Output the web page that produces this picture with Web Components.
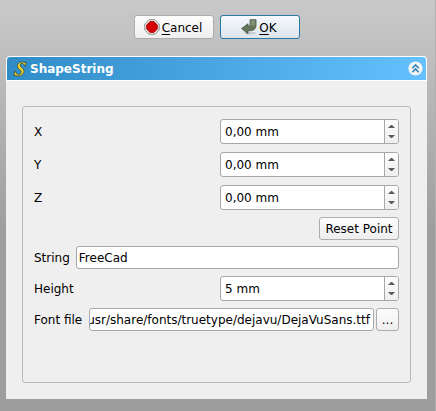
<!DOCTYPE html>
<html lang="en">
<head>
<meta charset="utf-8">
<title>ShapeString</title>
<style>
html,body{margin:0;height:100%;overflow:hidden}
body{font:12px/14px "DejaVu Sans",sans-serif;color:#000}
</style>
</head>
<body>
<task-dialog></task-dialog>
<script>
const define = (name, html) => customElements.define(name, class extends HTMLElement {
  constructor() {
    super();
    this.attachShadow({mode: 'open'}).innerHTML = '<style>*{box-sizing:border-box}:host{box-sizing:border-box}</style>' + html;
  }
});

define('push-button', `
<style>
:host{display:flex;align-items:center;justify-content:center;height:23px;border:1px solid #adadad;border-radius:3px;
background:linear-gradient(#fdfdfd,#eeeeee);white-space:pre}
:host([large]){width:80px;height:24px;gap:2px;padding:1px 2px 0 0}
:host([default]){border-color:#2b78a8;background:linear-gradient(#f6f9fc,#dce4ec)}
::slotted(svg){margin-bottom:2px}
</style><slot name="icon"></slot><span><slot></slot></span>`);

define('line-edit', `
<style>
:host{display:flex;align-items:center;height:23px;border:1px solid #a8a8a8;border-radius:3px;background:#fff;padding:0 2px;overflow:hidden;white-space:pre}
:host([end]){justify-content:flex-end;padding:0 3px 0 0}
span{flex:none}
</style><span><slot></slot></span>`);

define('spin-box', `
<style>
:host{display:flex;width:179px;height:25px;border:1px solid #a8a8a8;border-radius:3px;background:#fff;overflow:hidden}
.value{flex:1;padding:5px 0 0 4px;white-space:pre}
.steps{width:14px;border-left:1px solid #a8a8a8;background:linear-gradient(#fdfdfd,#efefef)}
svg{display:block}
</style><div class="value"><slot></slot></div>
<div class="steps"><svg width="13" height="23" shape-rendering="crispEdges" fill="#5c5c5c">
<path d="M5 5h3v1H5zM4 6h5v1H4zM3 7h7v1H3zM3 15h7v1H3zM4 16h5v1H4zM5 17h3v1H5z" fill="#a0a0a0"/>
<path d="M6 5h1v1h1v1h1v1H4V7h1V6h1zM4 15h5v1H8v1H7v1H6v-1H5v-1H4z"/></svg></div>`);

define('form-row', `
<style>
:host{display:flex;align-items:center;gap:7px}
:host([tight]){gap:6px}
.label{white-space:pre}
.field{flex:1;display:flex;gap:2px;justify-content:flex-end;min-width:0}
</style><div class="label"><slot name="label"></slot></div><div class="field"><slot></slot></div>`);

define('group-frame', `
<style>
:host{display:flex;flex-direction:column;margin:25px 16px 16px;border:1px solid #b9b9b9;border-radius:3px;padding:12px 11px;flex:1}
</style><slot></slot>`);

define('task-panel', `
<style>
:host{display:flex;flex-direction:column;width:421px;height:343px;background:#efefef;border-radius:4px 4px 0 0}
header{display:flex;align-items:center;height:25px;border:1px solid #fff;border-radius:4px 4px 0 0;background:linear-gradient(90deg,#308cc6,#65c0ff);
color:#fff;font-weight:bold;padding:0 3px 0 6px;flex:none}
.title{flex:1;padding-left:3px;margin-top:1px}
svg{display:block;flex:none}
</style>
<header><svg width="14" height="16" viewBox="0 0 14 16"><path d="M12.2 5.3 13.3 1l-1.3.5C9 .2 4.6 1.1 4.3 4.9c-.2 3.4 4.2 3.6 3.9 6.2-.3 3.2-4.7 3.5-5.6-.6L1.9 10 .7 15l1.3-.7c3.9 1.6 8.6.2 9-3.9.3-3.7-4.2-3.9-3.9-6.4.3-2.4 4-2.3 4.4 1.3z" fill="#f0d22f" stroke="#3a4f3c" stroke-width=".8"/></svg>
<span class="title"><slot name="title"></slot></span>
<svg width="15" height="15" viewBox="0 0 15 15"><circle cx="7.5" cy="7.5" r="7.1" fill="#f4f4f4"/><path d="M4.3 7.2 7.5 4l3.2 3.2M4.3 11.2 7.5 8l3.2 3.2" fill="none" stroke="#2c84bd" stroke-width="1.6"/></svg></header>
<slot></slot>`);

define('task-dialog', `
<style>
:host{display:flex;flex-direction:column;height:411px;padding:15px 0 0 6px;background:linear-gradient(#c9c9c9,#9e9e9e 230px);border-right:1px solid #b0b0b0}
.actions{display:flex;gap:6px;margin:0 0 17px 128px}
u{text-decoration-thickness:1px;text-underline-offset:2px}
.gap8{margin-bottom:8px}.gap7{margin-bottom:7px}.gap6{margin-bottom:6px}
line-edit{flex:1;min-width:0}
.reset{width:80px}.browse{width:23px}
svg{display:block}
</style>
<div class="actions">
<push-button large><svg slot="icon" width="16" height="16" viewBox="0 0 16 16"><path d="M5 .8h6L15.2 5v6L11 15.2H5L.8 11V5z" fill="#eee" stroke="#888a85"/><path d="M6 2.6h4L13.4 6v4L10 13.4H6L2.6 10V6z" fill="#d40000" stroke="#a40000" stroke-width=".8"/></svg><u>C</u>ancel</push-button>
<push-button large default><svg slot="icon" width="16" height="16" viewBox="0 0 16 16"><ellipse cx="9" cy="14" rx="6" ry="1.5" fill="#000" opacity=".12"/><path d="M9 .7h6v5.6c0 3-1.5 4.8-4.7 5.3H7v3.2L.6 9.5 7 4.8v2.4l2-.4z" fill="#64765a" stroke="#46503f" stroke-width=".8"/><path d="M9.5 1.3h4.8v4.4c-1 .8-3 1.2-4.8 1.1z" fill="#7e8f72"/></svg><u>O</u>K</push-button>
</div>
<task-panel><span slot="title">ShapeString</span>
<group-frame>
<form-row class="gap8"><span slot="label">X</span><spin-box>0,00 mm</spin-box></form-row>
<form-row class="gap8"><span slot="label">Y</span><spin-box>0,00 mm</spin-box></form-row>
<form-row class="gap7"><span slot="label">Z</span><spin-box>0,00 mm</spin-box></form-row>
<form-row class="gap6"><push-button class="reset">Reset Point</push-button></form-row>
<form-row class="gap7" tight><span slot="label">String</span><line-edit>FreeCad</line-edit></form-row>
<form-row class="gap7"><span slot="label">Height</span><spin-box>5 mm</spin-box></form-row>
<form-row><span slot="label">Font file</span><line-edit end>usr/share/fonts/truetype/dejavu/DejaVuSans.ttf</line-edit><push-button class="browse">...</push-button></form-row>
</group-frame>
</task-panel>`);
</script>
</body>
</html>
